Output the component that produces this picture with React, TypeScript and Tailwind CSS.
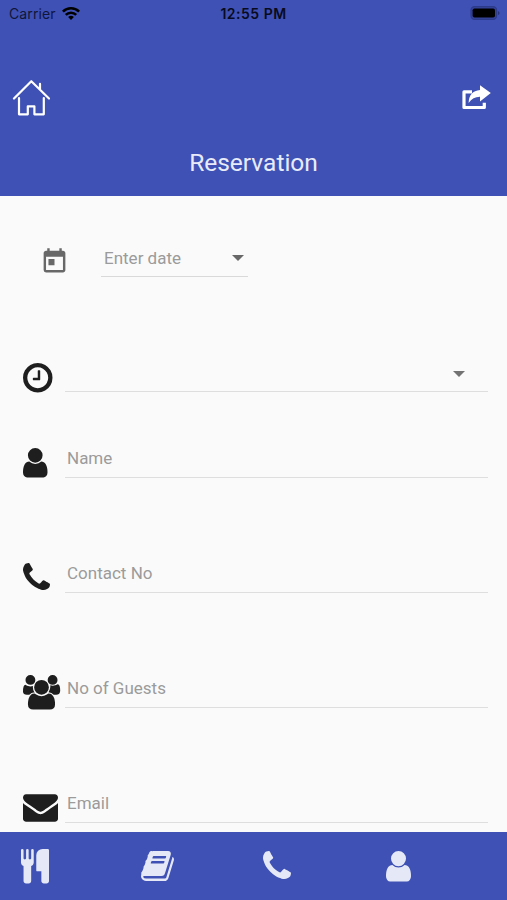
import type { ReactNode } from "react";
import { MdToday } from "react-icons/md";

type IconProps = { className?: string };

function UserIcon({ className }: IconProps) {
  return (
    <svg viewBox="256 128 1280 1536" preserveAspectRatio="none" overflow="visible" fill="currentColor" className={className}>
      <path d="M1536 1399q0 109-62.5 187t-150.5 78h-854q-88 0-150.5-78t-62.5-187q0-85 8.5-160.5t31.5-152 58.5-131 94-89 134.5-34.5q131 128 313 128t313-128q76 0 134.5 34.5t94 89 58.5 131 31.5 152 8.5 160.5zm-256-887q0 159-112.5 271.5t-271.5 112.5-271.5-112.5-112.5-271.5 112.5-271.5 271.5-112.5 271.5 112.5 112.5 271.5z" />
    </svg>
  );
}

function PhoneIcon({ className }: IconProps) {
  return (
    <svg viewBox="192 128 1408 1408" overflow="visible" fill="currentColor" className={className}>
      <path d="M1600 1240q0 27-10 70.5t-21 68.5q-21 50-122 106-94 51-186 51-27 0-53-3.5t-57.5-12.5-47-14.5-55.5-20.5-49-18q-98-35-175-83-127-79-264-216t-216-264q-48-77-83-175-3-9-18-49t-20.5-55.5-14.5-47-12.5-57.5-3.5-53q0-92 51-186 56-101 106-122 25-11 68.5-21t70.5-10q14 0 21 3 18 6 53 76 11 19 30 54t35 63.5 31 53.5q3 4 17.5 25t21.5 35.5 7 28.5q0 20-28.5 50t-62 55-62 53-28.5 46q0 9 5 22.5t8.5 20.5 14 24 11.5 19q76 137 174 235t235 174q2 1 19 11.5t24 14 20.5 8.5 22.5 5q18 0 46-28.5t53-62 55-62 50-28.5q14 0 28.5 7t35.5 21.5 25 17.5q25 15 53.5 31t63.5 35 54 30q70 35 76 53 3 7 3 21z" />
    </svg>
  );
}

function ClockIcon({ className }: IconProps) {
  return (
    <svg viewBox="128 128 1536 1536" overflow="visible" fill="currentColor" className={className}>
      <path d="M1024 544v448q0 14-9 23t-23 9h-320q-14 0-23-9t-9-23v-64q0-14 9-23t23-9h224v-352q0-14 9-23t23-9h64q14 0 23 9t9 23zm416 352q0-148-73-273t-198-198-273-73-273 73-198 198-73 273 73 273 198 198 273 73 273-73 198-198 73-273zm224 0q0 209-103 385.5t-279.5 279.5-385.5 103-385.5-103-279.5-279.5-103-385.5 103-385.5 279.5-279.5 385.5-103 385.5 103 279.5 279.5 103 385.5z" />
    </svg>
  );
}

function UsersIcon({ className }: IconProps) {
  return (
    <svg viewBox="64 0 1920 1792" overflow="visible" fill="currentColor" className={className}>
      <path d="M657 896q-162 5-265 128h-134q-82 0-138-40.5t-56-118.5q0-353 124-353 6 0 43.5 21t97.5 42.5 119 21.5q67 0 133-23-5 37-5 66 0 159 93 293zm1071 637q0 120-73 189.5t-194 69.5h-874q-121 0-194-69.5t-73-189.5q0-53 3.5-103.5t14-109 26.5-108.5 43-97.5 62-81 85.5-53.5 111.5-20q10 0 43 21.5t73 48 107 48 135 21.5 135-21.5 107-48 73-48 43-21.5q61 0 111.5 20t85.5 53.5 62 81 43 97.5 26.5 108.5 14 109 3.5 103.5zm-1024-1277q0 106-75 181t-181 75-181-75-75-181 75-181 181-75 181 75 75 181zm704 384q0 159-112.5 271.5t-271.5 112.5-271.5-112.5-112.5-271.5 112.5-271.5 271.5-112.5 271.5 112.5 112.5 271.5zm576 225q0 78-56 118.5t-138 40.5h-134q-103-123-265-128 93-134 93-293 0-29-5-66 66 23 133 23 59 0 119-21.5t97.5-42.5 43.5-21q124 0 124 353zm-128-609q0 106-75 181t-181 75-181-75-75-181 75-181 181-75 181 75 75 181z" />
    </svg>
  );
}

function EnvelopeIcon({ className }: IconProps) {
  return (
    <svg viewBox="0 256 1792 1408" overflow="visible" fill="currentColor" className={className}>
      <path d="M1792 710v794q0 66-47 113t-113 47h-1472q-66 0-113-47t-47-113v-794q44 49 101 87 362 246 497 345 57 42 92.5 65.5t94.5 48 110 24.5h2q51 0 110-24.5t94.5-48 92.5-65.5q170-123 498-345 57-39 100-87zm0-294q0 79-49 151t-122 123q-376 261-468 325-10 7-42.5 31t-54 38.5-52 32.5-57.5 27-50 9h-2q-23 0-50-9t-57.5-27-52-32.5-54-38.5-42.5-31q-91-64-262-182.5t-205-142.5q-62-42-117-115.5t-55-136.5q0-78 41.5-130t118.5-52h1472q65 0 112.5 47t47.5 113z" />
    </svg>
  );
}

function CutleryIcon({ className }: IconProps) {
  return (
    <svg viewBox="192 64 1408 1792" preserveAspectRatio="none" overflow="visible" fill="currentColor" className={className}>
      <path d="M832 128v640q0 61-35.5 111t-92.5 70v779q0 52-38 90t-90 38h-128q-52 0-90-38t-38-90v-779q-57-20-92.5-70t-35.5-111v-640q0-26 19-45t45-19 45 19 19 45v416q0 26 19 45t45 19 45-19 19-45v-416q0-26 19-45t45-19 45 19 19 45v416q0 26 19 45t45 19 45-19 19-45v-416q0-26 19-45t45-19 45 19 19 45zm768 0v1600q0 52-38 90t-90 38h-128q-52 0-90-38t-38-90v-512h-224q-13 0-22.5-9.5t-9.5-22.5v-800q0-132 94-226t226-94h256q26 0 45 19t19 45z" />
    </svg>
  );
}

function BookIcon({ className }: IconProps) {
  return (
    <svg viewBox="64 128 1664 1536" preserveAspectRatio="none" overflow="visible" fill="currentColor" className={className}>
      <path d="M1703 478q40 57 18 129l-275 906q-19 64-76.5 107.5t-122.5 43.5h-923q-77 0-148.5-53.5t-99.5-131.5q-24-67-2-127 0-4 3-27t4-37q1-8-3-21.5t-3-19.5q2-11 8-21t16.5-23.5 16.5-23.5q23-38 45-91.5t30-91.5q3-10 .5-30t-.5-28q3-11 17-28t17-23q21-36 42-92t25-90q1-9-2.5-32t.5-28q4-13 22-30.5t22-22.5q19-26 42.5-84.5t27.5-96.5q1-8-3-25.5t-2-26.5q2-8 9-18t18-23 17-21q8-12 16.5-30.5t15-35 16-36 19.5-32 26.5-23.5 36-11.5 47.5 5.5l-1 3q38-9 51-9h761q74 0 114 56t18 130l-274 906q-36 119-71.5 153.5t-128.5 34.5h-869q-27 0-38 15-11 16-1 43 24 70 144 70h923q29 0 56-15.5t35-41.5l300-987q7-22 5-57 38 15 59 43zm-1064 2q-4 13 2 22.5t20 9.5h608q13 0 25.5-9.5t16.5-22.5l21-64q4-13-2-22.5t-20-9.5h-608q-13 0-25.5 9.5t-16.5 22.5zm-83 256q-4 13 2 22.5t20 9.5h608q13 0 25.5-9.5t16.5-22.5l21-64q4-13-2-22.5t-20-9.5h-608q-13 0-25.5 9.5t-16.5 22.5z" />
    </svg>
  );
}

function CaretIcon({ className }: IconProps) {
  return (
    <svg viewBox="0 0 12 6" fill="currentColor" className={className}>
      <path d="M0 0h12L6 6z" />
    </svg>
  );
}

function StatusBar() {
  return (
    <div className="flex h-[26px] items-center justify-between pr-[7px] pl-[9px] font-[Inter,sans-serif] text-black">
      <div className="flex w-20 items-center gap-[6px] text-[14px] tracking-[0.1px] text-[#10163a]">
        Carrier
        <svg viewBox="0 0 18 13" className="h-[13px] w-[18px] shrink-0 text-black" fill="none" stroke="currentColor" strokeWidth="2.6">
          <path d="M.9 4.7a11.4 11.4 0 0 1 16.2 0M3.8 7.9a7.3 7.3 0 0 1 10.4 0" />
          <path d="M9 13 6.1 10.1a4.1 4.1 0 0 1 5.8 0z" fill="currentColor" stroke="none" />
        </svg>
      </div>
      <div className="-ml-[2px] text-[14px] font-semibold tracking-[0.5px] text-[#080b20]">12:55 PM</div>
      <div className="flex w-20 justify-end">
        <svg viewBox="0 0 30 14" className="h-[14px] w-[30px]">
          <rect x="1" y="0.6" width="25.6" height="12.8" rx="3.6" fill="#35439a" stroke="#2d3b8c" strokeWidth="1.2" />
          <rect x="2.6" y="2.5" width="22.4" height="9" rx="1.8" fill="#000" />
          <path d="M28 4.9q1.6.7 1.6 2.1T28 9.1z" fill="#29357a" />
        </svg>
      </div>
    </div>
  );
}

function Header() {
  return (
    <header className="flex h-[196px] shrink-0 flex-col bg-[#3f51b5]">
      <StatusBar />
      <div className="mt-[53px] flex h-[38px] items-start justify-between pr-4 pl-3">
        <svg viewBox="0 0 38 37" className="h-[37px] w-[38px]" fill="none" stroke="#fff" strokeWidth="2.2" strokeLinecap="round" strokeLinejoin="round">
          <path d="M2 19.5 19.3 2.2 37 19.5M28 10.2V4.8" />
          <path d="M7 19v16.3h8.8v-8h6.6v8h9.4V19" />
        </svg>
        <svg viewBox="0 0 30 25" className="mt-[6px] h-[25px] w-[30px]" fill="none">
          <path d="M11 6.8H3v15.7h20.3v-4.7" stroke="#fff" strokeWidth="3.2" strokeLinejoin="round" />
          <path d="M19 .2 29.8 8 19 16.4v-4.6Q12 11.7 7.6 18 8 6 19 5z" fill="#fff" />
        </svg>
      </div>
      <h1 className="mt-[27px] text-center text-[24.5px] leading-[37px] text-[#e8ebfa]">Reservation</h1>
    </header>
  );
}

type FieldProps = {
  icon: ReactNode;
  label?: string;
  select?: boolean;
};

function Field({ icon, label, select }: FieldProps) {
  return (
    <div className="flex h-9 pr-[19px] pl-[23px]">
      <div className="w-[42px] shrink-0">{icon}</div>
      <div className="flex h-9 flex-1 items-start justify-between border-b border-[#dedede] pr-[23px] pl-[2px] text-[17px] leading-8 text-[#9b9b9b]">
        <span>{label}</span>
        {select && <CaretIcon className="mt-[15px] h-[6px] w-3 text-[#737373]" />}
      </div>
    </div>
  );
}

export default function App() {
  return (
    <div className="flex h-[900px] w-[507px] flex-col overflow-hidden bg-[#fafafa] font-[Roboto,sans-serif]">
      <Header />

      <main className="flex-1 overflow-hidden">
        {/* Date */}
        <div className="mt-[45px] flex h-9 pl-10">
          <MdToday className="mt-[6px] h-[29px] w-[29px] shrink-0 text-[#686868]" />
          <div className="ml-8 flex w-[147px] items-start justify-between border-b border-[#d9d9d9] pr-1 pl-[3px] text-[17px] leading-[34px] text-[#9b9b9b]">
            <span>Enter date</span>
            <CaretIcon className="mt-[14px] h-[6px] w-3 text-[#686868]" />
          </div>
        </div>

        {/* Form fields */}
        <div className="mt-[78.5px] flex flex-col text-[#1e1e1e]">
          <Field select icon={<ClockIcon className="mt-[7px] h-[29.5px] w-[29.5px]" />} />
          <div className="mt-[50px] flex flex-col gap-[79px]">
            <Field label="Name" icon={<UserIcon className="mt-[6px] h-[29.5px] w-[24.5px]" />} />
            <Field label="Contact No" icon={<PhoneIcon className="mt-[6.5px] h-[27px] w-[27px]" />} />
            <Field label="No of Guests" icon={<UsersIcon className="mt-[3px] h-[34.5px] w-[37px]" />} />
            <Field label="Email" icon={<EnvelopeIcon className="mt-[7px] h-[28px] w-[35px]" />} />
          </div>
        </div>
      </main>

      {/* Bottom tabs */}
      <nav className="grid h-[68px] shrink-0 grid-cols-[121px_121px_122px_1fr] bg-[#3f51b5] pl-5 text-[#e5e9f7]">
        <CutleryIcon className="mt-[17px] ml-px h-[34.5px] w-7" />
        <BookIcon className="mt-[19px] h-[30px] w-[33px]" />
        <PhoneIcon className="mt-[18.5px] ml-px h-[28px] w-[28px]" />
        <UserIcon className="mt-[18.5px] ml-[1.5px] h-[30.5px] w-[25px]" />
      </nav>
    </div>
  );
}
